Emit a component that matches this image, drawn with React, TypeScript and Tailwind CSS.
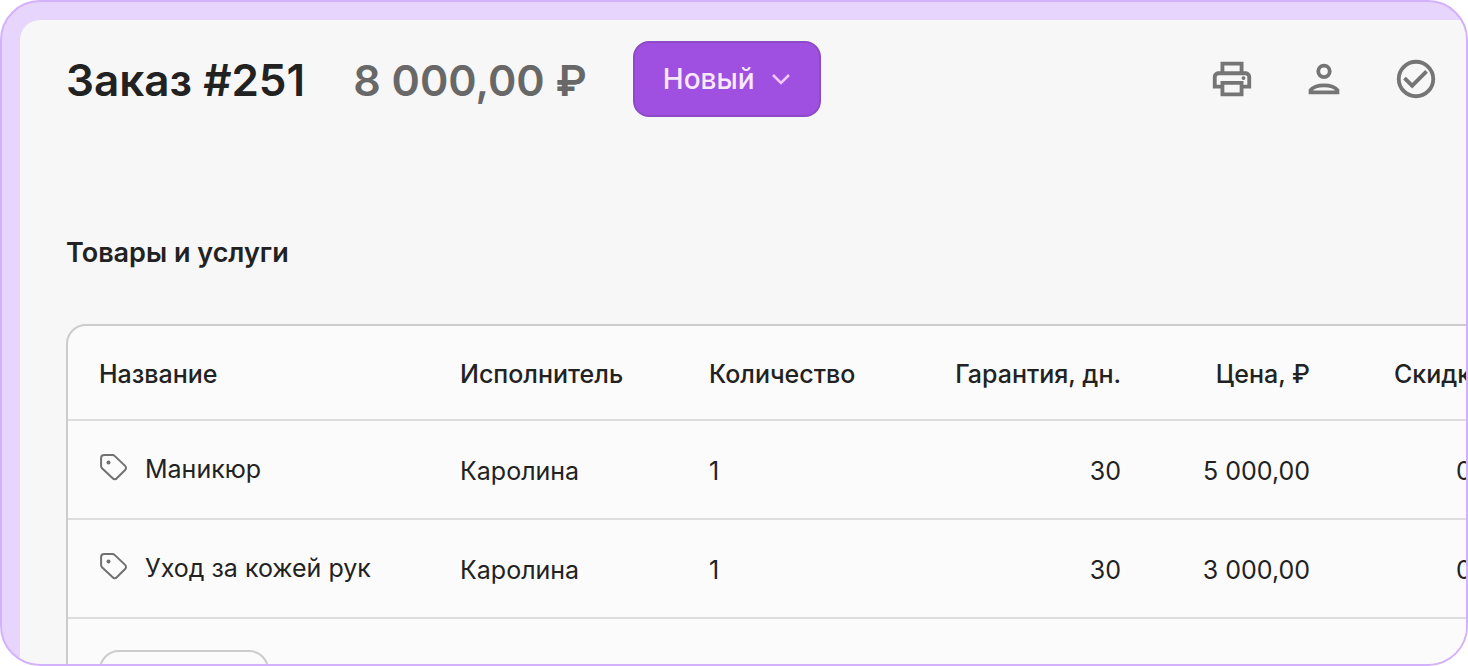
import type { ReactNode } from 'react';

type OrderItem = {
  name: string;
  worker: string;
  quantity: number;
  warranty: number;
  price: string;
  discount: string;
};

const ITEMS: OrderItem[] = [
  { name: 'Маникюр', worker: 'Каролина', quantity: 1, warranty: 30, price: '5 000,00', discount: '0,00' },
  { name: 'Уход за кожей рук', worker: 'Каролина', quantity: 1, warranty: 30, price: '3 000,00', discount: '0,00' },
];

function PrintIcon() {
  return (
    <svg viewBox="0 0 24 24" className="size-[46px]" fill="currentColor" aria-hidden="true">
      <path d="M19 8h-1V3H6v5H5c-1.66 0-3 1.34-3 3v6h4v4h12v-4h4v-6c0-1.66-1.34-3-3-3zM8 5h8v3H8V5zm8 14H8v-4h8v4zm2-4v-2H6v2H4v-4c0-.55.45-1 1-1h14c.55 0 1 .45 1 1v4h-2z" />
      <circle cx="18" cy="11.5" r="1" />
    </svg>
  );
}

function PersonIcon() {
  return (
    <svg viewBox="0 0 24 24" className="size-[46px]" fill="none" stroke="currentColor" strokeWidth="2" aria-hidden="true">
      <circle cx="12" cy="8" r="3" />
      <path d="M5 19v-1.200c1.200-1.600 3.800-2.500 7-2.500s5.800.9 7 2.500v1.200z" />
    </svg>
  );
}

function CheckIcon() {
  return (
    <svg viewBox="0 0 24 24" className="size-[46px]" fill="none" stroke="currentColor" strokeWidth="2" aria-hidden="true">
      <circle cx="12" cy="12" r="9" />
      <path d="M6 11.500l4 4 7.500-7.500" />
    </svg>
  );
}

function TagIcon() {
  return (
    <svg viewBox="0 0 30 30" className="size-[30px] shrink-0 text-[#707070]" fill="none" stroke="currentColor" strokeWidth="2" strokeLinejoin="round" aria-hidden="true">
      <path d="M5 2h8.500a3 3 0 0 1 2.100.9l10.500 10a2.800 2.800 0 0 1 0 4.100l-8.300 8.300a2.800 2.800 0 0 1-4.100 0L3 15.200a3 3 0 0 1-.9-2.100V5a3 3 0 0 1 3-3z" />
      <circle cx="9.500" cy="9.500" r="2" fill="currentColor" stroke="none" />
    </svg>
  );
}

function IconButton({ label, children }: { label: string; children: ReactNode }) {
  return (
    <button type="button" aria-label={label} className="text-[#757575]">
      {children}
    </button>
  );
}

export default function App() {
  return (
    <div className="h-screen overflow-hidden rounded-[40px] border-2 border-[#d4b2fb] bg-[#e8d5fd] pt-[18px] pl-[18px] font-['Inter','Liberation_Sans',sans-serif] text-[#222222]">
      <main className="h-full overflow-hidden rounded-tl-[20px] bg-[#f7f7f7] pt-[21px] pl-[46px]">
        <header className="flex items-center pr-[27px]">
          <h1 className="pt-0.5 text-[44px] leading-[52px] font-semibold whitespace-nowrap">Заказ #251</h1>
          <span className="ml-12 pt-0.5 text-[43px] leading-[52px] font-semibold whitespace-nowrap text-[#686868]">
            8 000,00 ₽
          </span>
          <button
            type="button"
            className="ml-[46px] flex h-[76px] items-center gap-4 rounded-2xl border-2 border-[#8d4bc8] bg-[#9f50e0] px-7 text-[28px] leading-9 font-medium text-[#f8e9ff]"
          >
            Новый
            <svg viewBox="0 0 20 12" className="h-3 w-5 text-[#f0c8ff]" fill="none" stroke="currentColor" strokeWidth="2.5" aria-hidden="true">
              <path d="M2 2l8 8 8-8" />
            </svg>
          </button>
          <div className="ml-auto flex gap-[46px]">
            <IconButton label="Печать">
              <PrintIcon />
            </IconButton>
            <IconButton label="Клиент">
              <PersonIcon />
            </IconButton>
            <IconButton label="Готово">
              <CheckIcon />
            </IconButton>
          </div>
        </header>

        <h2 className="mt-[118px] text-[27px] leading-9 font-semibold">Товары и услуги</h2>

        <div className="mt-[53px] w-[1600px] rounded-[20px] border-2 border-[#cccccc] bg-[#fbfbfb] pb-8">
          <table className="w-full table-fixed text-left text-[25px] leading-8">
            <colgroup>
              <col className="w-[376px]" />
              <col className="w-[249px]" />
              <col className="w-[210px]" />
              <col className="w-[232px]" />
              <col className="w-[189px]" />
              <col />
            </colgroup>
            <thead>
              <tr className="h-[94px] border-b-2 border-[#dddddd] [&>th]:pt-0.5 [&>th]:font-medium">
                <th className="pl-[31px]">Название</th>
                <th className="pl-4">Исполнитель</th>
                <th className="pl-4">Количество</th>
                <th className="pr-3.5 text-right">Гарантия, дн.</th>
                <th className="pr-3.5 text-right">Цена, ₽</th>
                <th className="pl-[70px]">Скидка, ₽</th>
              </tr>
            </thead>
            <tbody>
              {ITEMS.map((item) => (
                <tr key={item.name} className="h-[99px] border-b-2 border-[#dddddd] [&>td+td]:pt-0.5">
                  <td className="pb-0.5 pl-[31px]">
                    <div className="flex items-start gap-4">
                      <TagIcon />
                      <span className="whitespace-nowrap">{item.name}</span>
                    </div>
                  </td>
                  <td className="pl-4">{item.worker}</td>
                  <td className="pl-4">{item.quantity}</td>
                  <td className="pr-3.5 text-right">{item.warranty}</td>
                  <td className="pr-3.5 text-right">{item.price}</td>
                  <td className="pl-[132px]">{item.discount}</td>
                </tr>
              ))}
            </tbody>
          </table>
          <button type="button" aria-label="Добавить" className="mt-[31px] ml-[31px] block h-16 w-[170px] rounded-[20px] border-2 border-[#cccccc]" />
        </div>
      </main>
    </div>
  );
}
